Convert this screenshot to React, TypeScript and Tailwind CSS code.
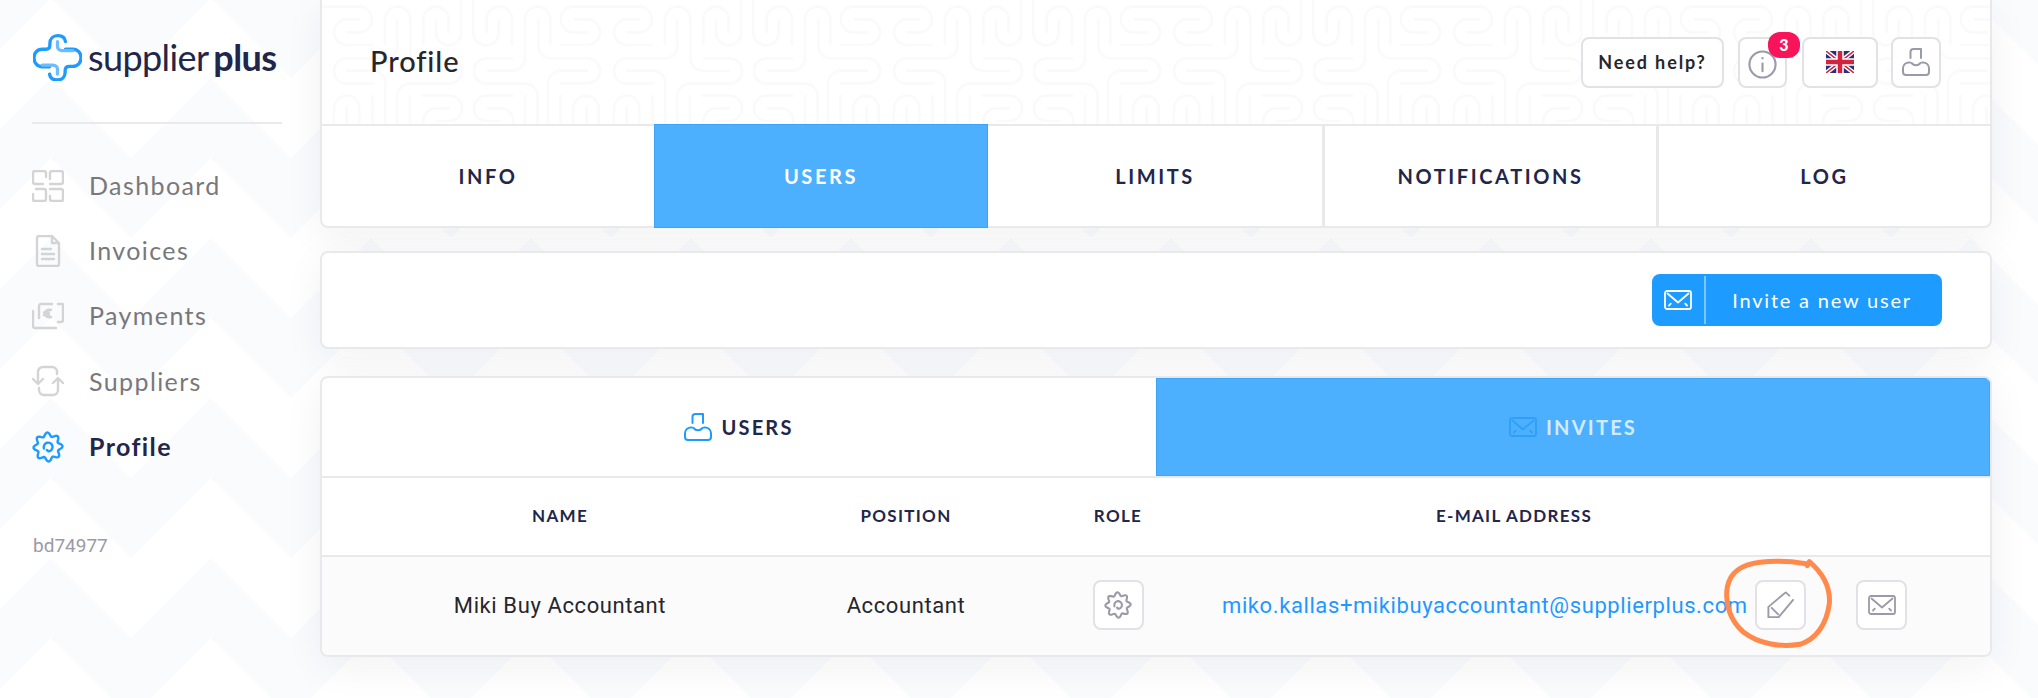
import React from 'react';

const gearPath = (cx: number, cy: number, r: number, amp: number) => {
  const pts: string[] = [];
  for (let i = 0; i < 96; i++) {
    const a = (i / 96) * Math.PI * 2;
    const rr = r + amp * Math.cos(8 * a + Math.PI / 8);
    pts.push(`${(cx + rr * Math.cos(a)).toFixed(2)} ${(cy + rr * Math.sin(a)).toFixed(2)}`);
  }
  return `M${pts.join('L')}Z`;
};

function GearIcon({ className }: { className?: string }) {
  return (
    <svg viewBox="0 0 32 32" fill="none" stroke="currentColor" strokeWidth="2.4" strokeLinejoin="round" strokeLinecap="round" className={className}>
      <path d={gearPath(16, 16, 12.6, 1.9)} />
      <path d="M12 17.5A4.4 4.4 0 1 1 16.5 20.4M16.5 20.4l-1.6-1.4" />
    </svg>
  );
}

function MailIcon({ className }: { className?: string }) {
  return (
    <svg viewBox="0 0 28 20" fill="none" stroke="currentColor" strokeWidth="1.8" strokeLinecap="round" strokeLinejoin="round" className={className}>
      <rect x="1" y="1" width="26" height="18" rx="2" />
      <path d="M3.5 3.5L14 12.5L24.500 3.500" />
      <path d="M5 15.500l1.800-1.800M23 15.500l-1.800-1.800" />
    </svg>
  );
}

function UserIcon({ className }: { className?: string }) {
  return (
    <svg viewBox="0 0 28 28" fill="none" stroke="currentColor" strokeWidth="2" strokeLinecap="round" strokeLinejoin="round" className={className}>
      <path d="M8.500 10V4a3 3 0 0 1 3-3H19V10" />
      <path d="M9.500 15c2.500 3 6.500 3 9 0" />
      <path d="M8 14.500H7a6 6 0 0 0-6 5.500v4a3 3 0 0 0 3 3h20a3 3 0 0 0 3-3v-4a6 6 0 0 0-6-5.500h-1" />
    </svg>
  );
}

function PencilIcon({ className }: { className?: string }) {
  return (
    <svg viewBox="0 0 30 30" fill="none" stroke="currentColor" strokeWidth="2" strokeLinecap="round" strokeLinejoin="round" className={className}>
      <path d="M28 9.500L12.500 28H1.500V17L20 1.500L24 5" />
      <path d="M5 18l7 7" />
    </svg>
  );
}

function InfoIcon({ className }: { className?: string }) {
  return (
    <svg viewBox="0 0 30 30" fill="none" stroke="currentColor" strokeWidth="2.200" strokeLinecap="round" className={className}>
      <circle cx="15" cy="15" r="13.500" />
      <path d="M15 14v8" />
      <circle cx="15" cy="8.500" r="1.200" fill="currentColor" stroke="none" />
    </svg>
  );
}

function UkFlag() {
  return (
    <svg viewBox="0 0 28 22" className="w-7 h-[22px]">
      <rect width="28" height="22" fill="#27307a" />
      <path d="M0 0L28 22M28 0L0 22" stroke="#fff" strokeWidth="4.500" />
      <path d="M0 0L28 22M28 0L0 22" stroke="#d3243f" strokeWidth="1.500" />
      <path d="M14 0V22M0 11H28" stroke="#fff" strokeWidth="7.500" />
      <path d="M14 0V22M0 11H28" stroke="#d3243f" strokeWidth="4.500" />
    </svg>
  );
}

function Logo() {
  return (
    <svg viewBox="100 105 148 142" fill="none" strokeWidth="10" strokeLinecap="round" className="w-[49px] h-[47px] shrink-0">
      <path d="M198 128C196 114 186 110 175 110C160 110 151 120 151 133V138C151 146 146 151 138 151H128C112 151 103 163 103 177C103 192 113 204 128 204H150" stroke="#1d9bff" />
      <path d="M150 226C152 240 162 244 173 244C188 244 197 234 197 221V216C197 208 202 203 210 203H220C236 203 245 191 245 177C245 162 235 151 220 151H198" stroke="#1d9bff" />
      <path d="M174 128V142C174 150 180 155 188 155H220" stroke="#6cbdff" />
      <path d="M174 226V212C174 204 168 199 160 199H128" stroke="#6cbdff" />
    </svg>
  );
}

function MazeBackground() {
  const maze = (
    <>
      <path d="M145 97H100A38 38 0 0 1 62 58A38 38 0 0 1 100 20H298A38 38 0 0 1 336 58A38 38 0 0 1 298 97H258" />
      <path d="M100 58H142A38 38 0 0 1 180 97A38 38 0 0 1 142 135H60" />
      <path d="M300 58H260A38 38 0 0 0 222 97A38 38 0 0 0 260 135H340" />
      <path d="M375 135V58A38 38 0 0 1 451 58V175A38 38 0 0 0 489 213H570" />
      <path d="M412 58V135A38 38 0 0 1 374 175H260A38 38 0 0 0 222 213A38 38 0 0 0 260 251H340" />
      <path d="M490 135V58A38 38 0 0 1 566 58V98" />
      <path d="M528 58V98A38 38 0 0 0 604 98V0" />
      <path d="M640 0V98A38 38 0 0 0 716 98V58" />
      <path d="M680 98V58A38 38 0 0 1 756 58V135" />
      <path d="M680 212H757A38 38 0 0 0 795 175V58A38 38 0 0 1 871 58V135" />
      <path d="M835 58V135A38 38 0 0 0 873 175H982A38 38 0 0 1 1020 212A38 38 0 0 1 982 250H900" />
      <path d="M-5 175H142A38 38 0 0 1 180 212A38 38 0 0 1 142 250H60" />
      <path d="M490 175H568A38 38 0 0 1 606 213A38 38 0 0 1 568 251H450A38 38 0 0 0 412 289V378" />
      <path d="M760 175H680A38 38 0 0 0 642 213A38 38 0 0 0 680 251H795A38 38 0 0 1 833 289V378" />
      <path d="M145 212H62A38 38 0 0 0 24 250V378" />
      <path d="M985 212H902A38 38 0 0 0 864 250V378" />
      <path d="M258 212H338A38 38 0 0 1 376 250V378" />
      <path d="M62 285V378M140 320V378M260 320V378M338 285V378M450 285V378M795 285V378M902 285V378" />
      <path d="M100 378V325A38 38 0 0 1 176 325V378M222 378V325A38 38 0 0 1 298 325V378" />
      <path d="M485 287H568A38 38 0 0 1 606 325A38 38 0 0 1 568 363H530" />
      <path d="M570 325H530A38 38 0 0 0 490 365V378" />
      <path d="M760 287H680A38 38 0 0 0 642 325A38 38 0 0 0 680 363H720" />
      <path d="M680 325H720A38 38 0 0 1 760 365V378" />
    </>
  );
  return (
    <svg className="absolute inset-0 w-full h-full" aria-hidden="true">
      <defs>
        <pattern id="maze" patternUnits="userSpaceOnUse" x="238" y="0" width="280" height="126" viewBox="60 0 840 378">
          <g fill="none" stroke="#fafafa" strokeWidth="8" strokeLinecap="butt">{maze}</g>
        </pattern>
      </defs>
      <rect width="100%" height="100%" fill="url(#maze)" />
    </svg>
  );
}

function ChevronBackground() {
  return (
    <svg className="absolute inset-0 w-full h-full" aria-hidden="true">
      <defs>
        <pattern id="chevrons" patternUnits="userSpaceOnUse" x="51" y="78" width="160" height="160">
          <polygon points="0,0 80,80 160,0 160,80 80,160 0,80" fill="#fafbfd" />
        </pattern>
      </defs>
      <rect width="100%" height="100%" fill="url(#chevrons)" />
    </svg>
  );
}

const navItems = [
  {
    label: 'Dashboard',
    icon: (
      <svg viewBox="0 0 32 32" fill="none" stroke="#d4d4d6" strokeWidth="2.400" strokeLinecap="round" strokeLinejoin="round" className="w-8 h-8">
        <path d="M14 7V3a2 2 0 0 0-2-2H3a2 2 0 0 0-2 2v9a2 2 0 0 0 2 2h8" />
        <path d="M18 14h11a2 2 0 0 0 2-2V3a2 2 0 0 0-2-2h-9a2 2 0 0 0-2 2v6" />
        <path d="M1 24v5a2 2 0 0 0 2 2h9a2 2 0 0 0 2-2v-8a2 2 0 0 0-2-2H4" />
        <path d="M18 19h11a2 2 0 0 1 2 2v8a2 2 0 0 1-2 2h-9a2 2 0 0 1-2-2v-3" />
      </svg>
    ),
  },
  {
    label: 'Invoices',
    icon: (
      <svg viewBox="0 0 32 32" fill="none" stroke="#d4d4d6" strokeWidth="2.400" strokeLinecap="round" strokeLinejoin="round" className="w-8 h-8">
        <path d="M20 1H7a2 2 0 0 0-2 2v26a2 2 0 0 0 2 2h18a2 2 0 0 0 2-2V8l-7-7v7h7" />
        <path d="M10 14h9M10 19h12M10 24h12" />
      </svg>
    ),
  },
  {
    label: 'Payments',
    icon: (
      <svg viewBox="0 0 32 32" fill="none" stroke="#d4d4d6" strokeWidth="2.400" strokeLinecap="round" strokeLinejoin="round" className="w-8 h-8">
        <path d="M26 4h4a1 1 0 0 1 1 1v15a2 2 0 0 1-2 2h-3M7 18V6a2 2 0 0 1 2-2h11" />
        <path d="M1 11v15a2 2 0 0 0 2 2h21" />
        <path d="M19 10c-4-1-6 1-6 3.500s2 4.500 6 3.500M12 12.500h5M12 15h5" />
      </svg>
    ),
  },
  {
    label: 'Suppliers',
    icon: (
      <svg viewBox="0 0 32 32" fill="none" stroke="#d4d4d6" strokeWidth="2.400" strokeLinecap="round" strokeLinejoin="round" className="w-8 h-8">
        <path d="M6 18V7a5 5 0 0 1 5-5h9a5 5 0 0 1 5 5v2" />
        <path d="M26 14v11a5 5 0 0 1-5 5h-9a5 5 0 0 1-5-5v-2" />
        <path d="M1 14l5 5 5-5M21 18l5-5 5 5" />
      </svg>
    ),
  },
];

const profileTabs = ['INFO', 'USERS', 'LIMITS', 'NOTIFICATIONS', 'LOG'];
const iconButton = 'flex items-center justify-center h-[51px] bg-white border-2 border-[#e1e1e7] rounded-lg';
const rowButton = 'flex items-center justify-center w-[51px] h-[50px] bg-white border-2 border-[#e1e1e7] rounded-lg text-[#9a9aa8]';

export default function App() {
  return (
    <div className="relative h-[698px] overflow-hidden bg-white text-[#22264a] [font-family:Lato,sans-serif]">
      <ChevronBackground />
      <div className="relative flex">
        {/* sidebar */}
        <aside className="w-[320px] shrink-0 pl-8 pr-[38px]">
          <div className="flex items-center gap-[6px] h-[122px] pb-[8px] pl-[1px]">
            <Logo />
            <span className="text-[36px] leading-none tracking-[-0.6px] [word-spacing:-3px] whitespace-nowrap">
              supplier <span className="font-bold">plus</span>
            </span>
          </div>
          <div className="h-[2px] bg-[#eaeaec]" />
          <nav className="mt-[29px]">
            {navItems.map(item => (
              <div key={item.label} className="flex items-center gap-[25px] h-[65.250px] text-[25px] tracking-[1.400px] text-[#78787c]">
                {item.icon}
                <span>{item.label}</span>
              </div>
            ))}
            <div className="flex items-center gap-[25px] h-[65.250px] text-[25px] tracking-[1.400px] font-bold">
              <GearIcon className="w-8 h-8 text-[#1d9bff]" />
              <span>Profile</span>
            </div>
          </nav>
          <div className="mt-[53px] pl-[1px] text-[19px] text-[#9a9aa8] [font-family:Roboto,sans-serif]">bd74977</div>
        </aside>

        {/* main column */}
        <main className="w-[1672px] shrink-0">
          <div className="bg-white border-2 border-t-0 border-[#e9e9eb] rounded-b-lg shadow-[0_10px_40px_rgba(30,30,60,0.06)]">
            <div className="relative flex items-center justify-between h-[126px] border-b-2 border-[#e9e9eb] pl-[48px] pr-[49px]">
              <MazeBackground />
              <h1 className="relative text-[29px] tracking-[0.900px] font-medium text-[#26262c] -mt-[3px]">Profile</h1>
              <div className="relative flex items-center">
                <div className={`${iconButton} w-[143px] text-[18px] font-bold tracking-[1.900px] text-[#26262c]`}>Need help?</div>
                <div className={`${iconButton} relative w-[49px] ml-[14px] text-[#9a9aa8]`}>
                  <InfoIcon className="w-[29px] h-[29px] mt-1" />
                  <span className="absolute -top-[7px] left-[28px] flex items-center justify-center w-8 h-[26px] rounded-xl bg-[#f7145a] text-white text-[16px] font-black">3</span>
                </div>
                <div className={`${iconButton} w-[76px] ml-[15px]`}>
                  <UkFlag />
                </div>
                <div className={`${iconButton} w-[50px] ml-[13px] text-[#9a9aa8]`}>
                  <UserIcon className="w-7 h-7" />
                </div>
              </div>
            </div>
            <div className="grid grid-cols-[332px_334px_334px_334px_1fr] h-[100px] text-[20px] font-bold tracking-[2.600px]">
              {profileTabs.map((tab, i) => (
                <div
                  key={tab}
                  className={
                    tab === 'USERS'
                      ? 'relative -mt-[2px] -mb-[2px] flex items-center justify-center bg-[#4cb0ff] border border-[#3aa5fb] text-white'
                      : `flex items-center justify-center ${i > 2 ? 'border-l-[3px] border-[#e9e9eb]' : ''}`
                  }
                >
                  {tab}
                </div>
              ))}
            </div>
          </div>

          <div className="flex items-center justify-end h-[98px] mt-[23px] pr-[48px] bg-white border-2 border-[#e9e9eb] rounded-lg shadow-[0_10px_40px_rgba(30,30,60,0.06)]">
            <button className="flex items-center w-[290px] h-[52px] rounded-lg bg-[#1d9bff] text-white">
              <span className="flex items-center justify-center w-[52px] h-full">
                <MailIcon className="w-7 h-5" />
              </span>
              <span className="w-[2px] h-12 bg-[#7cc6ff]" />
              <span className="flex-1 text-center text-[20px] tracking-[1.800px] pr-1">Invite a new user</span>
            </button>
          </div>

          <div className="mt-[27px] bg-white border-2 border-[#e9e9eb] rounded-lg shadow-[0_10px_40px_rgba(30,30,60,0.06)] overflow-hidden">
            <div className="flex h-[100px] border-b-2 border-[#e9e9eb] text-[20px] font-bold tracking-[2.200px]">
              <div className="flex items-center justify-center gap-[9px] w-[834px]">
                <UserIcon className="w-7 h-7 text-[#1d9bff]" />
                USERS
              </div>
              <div className="flex flex-1 items-center justify-center gap-[9px] bg-[#4cb0ff] border border-[#3aa5fb] text-[#d3ebff]">
                <MailIcon className="w-7 h-5 text-[#2f9ff8]" />
                INVITES
              </div>
            </div>
            <div className="grid grid-cols-[476px_216px_208px_584px_1fr] items-center h-[77px] pb-[2px] text-center text-[17px] font-bold tracking-[1.300px]">
              <div>NAME</div>
              <div>POSITION</div>
              <div>ROLE</div>
              <div>E-MAIL ADDRESS</div>
            </div>
            <div className="relative grid grid-cols-[476px_216px_208px_584px_1fr] items-center h-[100px] pb-[2px] border-t-2 border-[#e9e9eb] bg-[#fbfbfc] text-[22px] tracking-[0.600px] text-[#26262c] text-center [font-family:Roboto,sans-serif]">
              <div>Miki Buy Accountant</div>
              <div>Accountant</div>
              <div className="flex justify-center">
                <div className={rowButton}>
                  <GearIcon className="w-7 h-7" />
                </div>
              </div>
              <div className="flex items-center justify-between text-[#1f98ff]">
                <span className="whitespace-nowrap">miko.kallas+mikibuyaccountant@supplierplus.com</span>
                <div className={`${rowButton} shrink-0`}>
                  <PencilIcon className="w-7 h-7" />
                </div>
              </div>
              <div className="pl-[50px]">
                <div className={`${rowButton} w-[50px]`}>
                  <MailIcon className="w-7 h-5" />
                </div>
              </div>
              <svg viewBox="120 50 345 285" fill="none" stroke="#ff8a4c" strokeWidth="15" strokeLinecap="round" strokeLinejoin="round" className="absolute left-[1398px] top-0 w-[115px] h-[95px]">
                <path d="M378 70C340 64 290 60 240 66C190 72 152 90 142 140C134 190 150 240 190 275C235 310 300 322 360 312C410 296 440 250 448 190C452 140 430 100 388 64L382 76" />
              </svg>
            </div>
          </div>
        </main>
      </div>
    </div>
  );
}
